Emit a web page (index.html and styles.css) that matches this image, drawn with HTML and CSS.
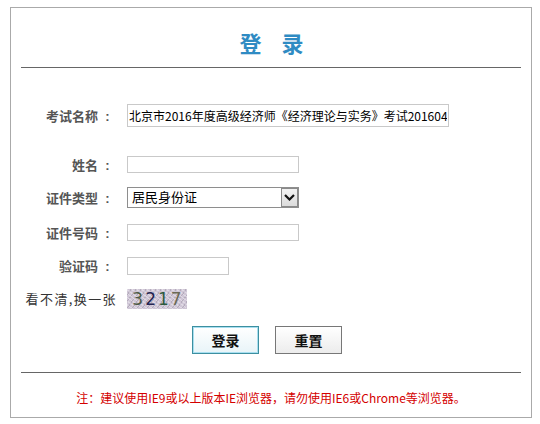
FILE: index.html
```html
<!DOCTYPE html>
<html lang="zh-CN">
<head>
<meta charset="utf-8">
<title>登录</title>
<link rel="stylesheet" href="styles.css">
</head>
<body>
<div class="box">
  <h1 class="title"><span>登</span><span>录</span></h1>
  <hr class="rule">
  <form class="form">
    <div class="row row-exam">
      <label class="label">考试名称<span class="colon">:</span></label>
      <input class="field field-exam" type="text" value="北京市2016年度高级经济师《经济理论与实务》考试201604">
    </div>
    <div class="row">
      <label class="label">姓名<span class="colon">:</span></label>
      <input class="field field-mid" type="text">
    </div>
    <div class="row">
      <label class="label">证件类型<span class="colon">:</span></label>
      <div class="select-wrap">
        <select class="select">
          <option>居民身份证</option>
        </select>
        <span class="select-arrow"><svg width="11" height="7" viewBox="0 0 11 7"><path d="M1 1 L5.5 5.5 L10 1" fill="none" stroke="#111" stroke-width="2.2"/></svg></span>
      </div>
    </div>
    <div class="row row-id">
      <label class="label">证件号码<span class="colon">:</span></label>
      <input class="field field-mid" type="text">
    </div>
    <div class="row">
      <label class="label">验证码<span class="colon">:</span></label>
      <input class="field field-short" type="text">
    </div>
    <div class="row">
      <span class="label label-plain">看不清,换一张</span>
      <div class="captcha"><span class="d1">3</span><span class="d2">2</span><span class="d3">1</span><span class="d4">7</span></div>
    </div>
    <div class="buttons">
      <button type="button" class="btn btn-primary">登录</button>
      <button type="button" class="btn">重置</button>
    </div>
  </form>
  <hr class="rule rule-bottom">
  <p class="note">注：建议使用IE9或以上版本IE浏览器，请勿使用IE6或Chrome等浏览器。</p>
</div>
</body>
</html>
```
FILE: styles.css
```css
* { box-sizing: border-box; }
html, body { margin: 0; padding: 0; background: #fff; }
body { font-family: "Noto Sans CJK SC", "Liberation Sans", sans-serif; }

.box {
  margin: 7px 0 0 10px;
  width: 522px;
  height: 411px;
  border: 1px solid #aaa;
  background: #fff;
}

.title {
  margin: 0;
  padding-top: 19px;
  height: 59px;
  display: flex;
  justify-content: center;
  gap: 20px;
  font-size: 22px;
  line-height: 30px;
  font-weight: bold;
  color: #2f8bc3;
  padding-left: 1px;
}

.rule {
  margin: 0 10px;
  border: 0;
  border-top: 1px solid #666;
  height: 0;
}

.form {
  padding-top: 31px;
  display: flex;
  flex-direction: column;
}

.row {
  display: flex;
  align-items: center;
  height: 33px;
}
.row-exam { margin-bottom: 16px; }
.row-id { margin-top: 2px; }

.label {
  width: 104px;
  text-align: right;
  margin-right: 12px;
  font-size: 13px;
  font-weight: bold;
  color: #555;
  white-space: nowrap;
}
.colon {
  display: inline-block;
  width: 17px;
  text-align: center;
  font-family: "Liberation Sans", sans-serif;
  font-weight: bold;
  padding-left: 2px;
}
.label-plain {
  font-weight: normal;
  color: #333;
  width: 106px;
  margin-right: 10px;
  letter-spacing: 1.4px;
}

.field {
  border: 1px solid #c9c9c9;
  padding: 0 1px;
  margin: 0;
  font-family: "Noto Sans CJK SC", sans-serif;
  font-size: 13px;
  color: #000;
  background: #fff;
  outline: none;
}
.field-exam { width: 322px; height: 23px; font-size: 12px; }
.field-mid { width: 172px; height: 17px; }
.field-short { width: 102px; height: 18px; }

.select-wrap {
  position: relative;
  width: 172px;
  height: 21px;
}
.select {
  appearance: none;
  -webkit-appearance: none;
  display: block;
  width: 172px;
  height: 21px;
  border: 1px solid #8e8e8e;
  border-radius: 0;
  background: #fff;
  padding: 0 0 2px 4px;
  margin: 0;
  font-family: "Noto Sans CJK SC", sans-serif;
  font-size: 13px;
  line-height: 17px;
  color: #000;
  outline: none;
}
.select-arrow {
  position: absolute;
  right: 1px;
  top: 1px;
  width: 17px;
  height: 19px;
  background: linear-gradient(#f2f2f2, #dcdcdc);
  border: 1px solid #8a8a8a;
  display: flex;
  align-items: center;
  justify-content: center;
  pointer-events: none;
}

.captcha {
  width: 60px;
  height: 20px;
  display: flex;
  align-items: center;
  justify-content: center;
  gap: 2px;
  font-family: "DejaVu Sans", sans-serif;
  font-size: 17px;
  line-height: 20px;
  background-color: #cfc6d6;
  background-image:
    repeating-linear-gradient(37deg, rgba(255,255,255,0.35) 0 1px, transparent 1px 3px),
    repeating-linear-gradient(-53deg, rgba(120,110,130,0.3) 0 1px, transparent 1px 4px);
}
.captcha .d1 { color: #4d5a46; }
.captcha .d2 { color: #262552; }
.captcha .d3 { color: #2f5a3e; }
.captcha .d4 { color: #6b6a55; }

.buttons {
  margin-top: 11px;
  display: flex;
  justify-content: flex-start;
  gap: 16px;
  padding-left: 181px;
}
.btn {
  width: 67px;
  height: 28px;
  margin: 0;
  padding: 0;
  border: 1px solid #777;
  background: linear-gradient(#ffffff, #ececec);
  font-family: "Noto Sans CJK SC", sans-serif;
  font-size: 14px;
  font-weight: bold;
  color: #111;
  border-radius: 0;
}
.btn-primary {
  border: 1px solid #3d8fa0;
  box-shadow: inset 0 0 0 1px #a8dff0;
  background: linear-gradient(#ffffff, #e8f4f8);
}

.rule-bottom { margin-top: 18px; }

.note {
  margin: 17px 0 0;
  text-align: center;
  font-size: 12px;
  line-height: 16px;
  color: #d40000;
}
```
